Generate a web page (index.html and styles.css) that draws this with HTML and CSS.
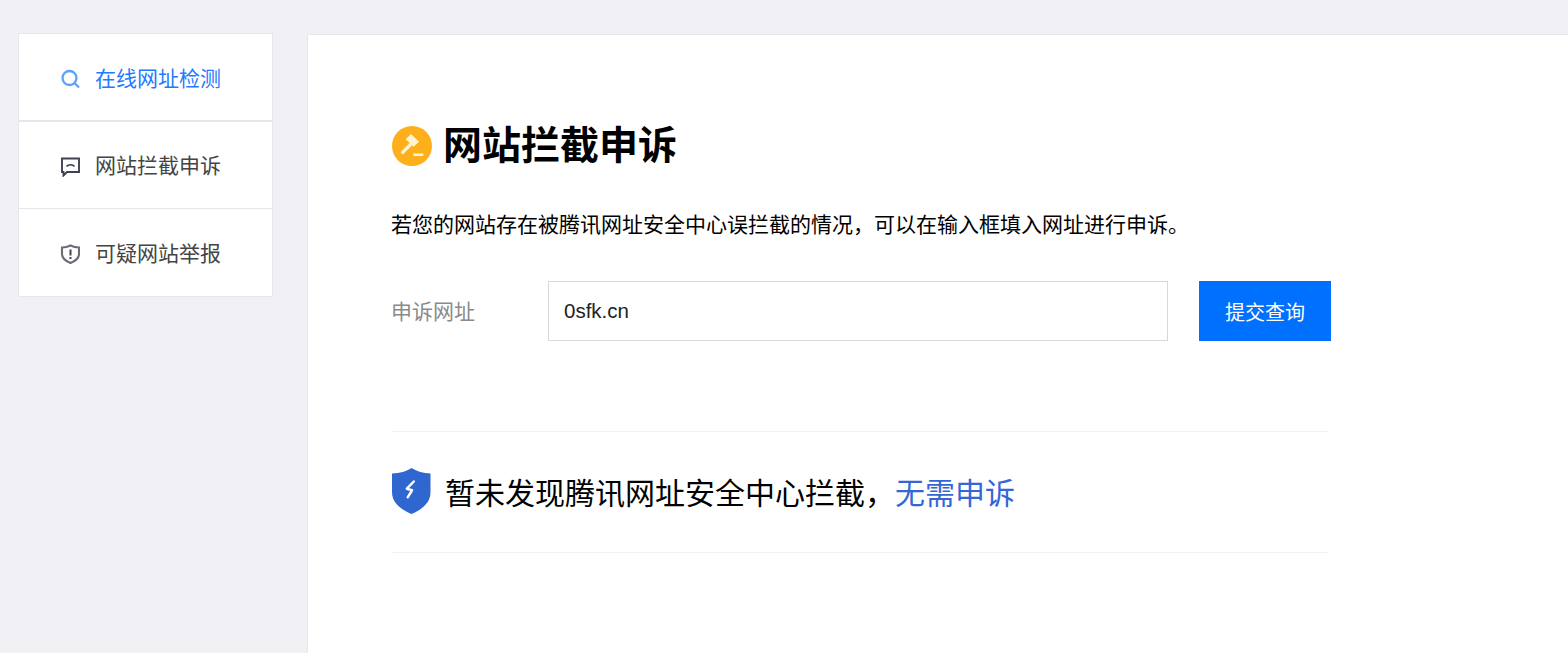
FILE: index.html
```html
<!DOCTYPE html>
<html lang="zh-CN">
<head>
<meta charset="utf-8">
<title>网站拦截申诉</title>
<link rel="stylesheet" href="styles.css">
</head>
<body>
<div class="page">
  <nav class="side">
    <a class="side-item active">
      <svg class="side-icon" viewBox="0 0 20 20"><circle cx="9.500" cy="9" r="7" fill="none" stroke="#5ea2f5" stroke-width="2.300"/><path d="M14.500 14l4.500 4.500" stroke="#5ea2f5" stroke-width="2.300" fill="none"/></svg>
      <span>在线网址检测</span>
    </a>
    <a class="side-item">
      <svg class="side-icon" viewBox="0 0 20 20"><path d="M2 1.500h17v13.500H7l-3.500 3.500V15H2z" fill="none" stroke="#3f4250" stroke-width="1.900"/><path d="M6.500 9.500C8 7 13 7 14.500 9.500" fill="none" stroke="#3f4250" stroke-width="1.500"/></svg>
      <span>网站拦截申诉</span>
    </a>
    <a class="side-item">
      <svg class="side-icon" viewBox="0 0 20 20"><path d="M10.500 1.500C13.500 3 16 3.500 19 3.500V10c0 4-3.500 7-8.500 9C5.500 17 2 14 2 10V3.500C5 3.500 7.500 3 10.500 1.500z" fill="none" stroke="#6a6d78" stroke-width="2.100"/><path d="M10.500 5.500v6" stroke="#3f4250" stroke-width="2"/><path d="M10.500 13v2" stroke="#3f4250" stroke-width="2"/></svg>
      <span>可疑网站举报</span>
    </a>
  </nav>
  <main class="main">
    <div class="title-row">
      <svg class="title-icon" viewBox="0 0 40 40"><circle cx="20" cy="20" r="20" fill="#fdb01c"/><path d="M13.700 13.300L19 8l8 7.700-5.300 5z" fill="#fff3d6"/><path d="M9.700 27.300L19 18" stroke="#fff3d6" stroke-width="3.200" fill="none"/><path d="M21.300 27.500h10V30h-10z" fill="#fff3d6"/></svg>
      <h1 class="title">网站拦截申诉</h1>
    </div>
    <p class="desc">若您的网站存在被腾讯网址安全中心误拦截的情况，可以在输入框填入网址进行申诉。</p>
    <form class="query">
      <label class="query-label" for="url">申诉网址</label>
      <input class="query-input" id="url" type="text" value="0sfk.cn">
      <button class="query-btn" type="button">提交查询</button>
    </form>
    <div class="result">
      <svg class="result-icon" viewBox="0 0 40 46"><path d="M19.500 0C25 3.500 31 5 38.500 5.500V24C38.500 35 30 41.500 19.500 46 9 41.500 0 35 0 24V5.500C8 5 14 3.500 19.500 0z" fill="#2f66d0"/><path d="M21.800 13.500l-7 7.200 5.200 1.600-4.300 7" fill="none" stroke="#fff" stroke-width="2.500" stroke-linejoin="round" stroke-linecap="round"/></svg>
      <p class="result-text">暂未发现腾讯网址安全中心拦截，<a class="result-link">无需申诉</a></p>
    </div>
  </main>
</div>
</body>
</html>
```
FILE: styles.css
```css
* { box-sizing: border-box; }
html, body { margin: 0; height: 100%; overflow: hidden; }
body {
  background: #f0f0f5;
  font-family: "Liberation Sans", "Noto Sans CJK SC", sans-serif;
  color: #000;
}
.page {
  display: flex;
  align-items: flex-start;
  padding: 33px 0 0 18px;
  height: 100%;
}
.side {
  width: 255px;
  flex: none;
  background: #fff;
  border: 1px solid #e6e6eb;
}
.side-item {
  display: flex;
  align-items: center;
  gap: 15px;
  height: 87px;
  padding-left: 41px;
  font-size: 21px;
  color: #444;
  border-top: 1px solid #e6e6eb;
}
.side-item:first-child { border-top: 0; border-bottom: 1px solid #e6e6eb; }
.side-item + .side-item { padding-bottom: 2px; }
.side-item:last-child { height: 88px; }
.side-item.active { color: #1f7aff; }
.side-icon { width: 20px; height: 20px; flex: none; margin-top: 3px; }
.side-item + .side-item .side-icon { margin-top: 5px; }
.main {
  flex: 1;
  align-self: stretch;
  margin-left: 34px;
  margin-top: 1px;
  background: #fff;
  border: 1px solid #e6e6eb;
  border-width: 1px 0 0 1px;
  padding: 84px 0 0 83px;
}
.title-row { display: flex; align-items: center; gap: 11px; height: 54px; }
.title-icon { width: 40px; height: 40px; flex: none; margin-left: 1px; }
.title { margin: 0; font-size: 39px; font-weight: 700; line-height: 56px; }
.desc { margin: 36px 0 0; font-size: 21px; line-height: 32px; }
.query { display: flex; align-items: center; margin-top: 40px; width: 940px; }
.query-label { width: 157px; flex: none; font-size: 21px; color: #8a8a8a; margin-top: -2px; }
.query-input {
  width: 620px;
  height: 60px;
  border: 1px solid #d8d8d8;
  padding: 0 15px;
  font: 20.500px "Liberation Sans", "Noto Sans CJK SC", sans-serif;
  color: #222;
  background: #fff;
  outline: 0;
}
.query-btn {
  width: 132px;
  height: 60px;
  margin-left: 31px;
  border: 0;
  background: #0070ff;
  color: #fff;
  font: 20px "Liberation Sans", "Noto Sans CJK SC", sans-serif;
}
.result {
  display: flex;
  align-items: center;
  gap: 13px;
  width: 937px;
  height: 122px;
  margin-top: 90px;
  border-top: 1px solid #f2f2f2;
  border-bottom: 1px solid #f2f2f2;
}
.result-icon { width: 40px; height: 46px; flex: none; margin: -2px 0 0 1px; }
.result-text { margin: 4px 0 0; font-size: 30px; line-height: 42px; }
.result-link { color: #3367d6; }
```
